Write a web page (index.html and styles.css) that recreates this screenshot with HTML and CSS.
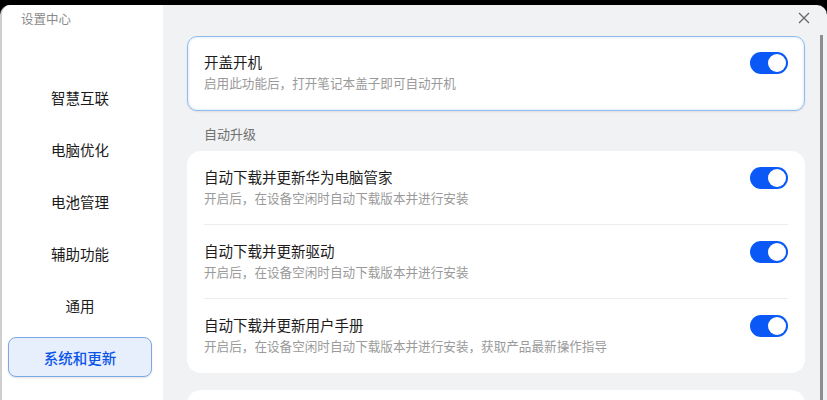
FILE: index.html
```html
<!DOCTYPE html>
<html lang="zh-CN">
<head>
<meta charset="utf-8">
<link rel="stylesheet" href="styles.css">
</head>
<body>
<div class="window">
  <aside class="sidebar">
    <div class="app-title">设置中心</div>
    <nav class="nav">
      <div class="nav-item">智慧互联</div>
      <div class="nav-item">电脑优化</div>
      <div class="nav-item">电池管理</div>
      <div class="nav-item">辅助功能</div>
      <div class="nav-item">通用</div>
      <div class="nav-item active">系统和更新</div>
    </nav>
  </aside>
  <main class="main">
    <div class="topbar">
      <svg class="close" width="12" height="12" viewBox="0 0 12 12"><path d="M1 1 L11 11 M11 1 L1 11" stroke="#666" stroke-width="1.3" fill="none"/></svg>
    </div>
    <div class="content">
      <div class="card focused">
        <div class="row">
          <div class="texts">
            <div class="title">开盖开机</div>
            <div class="sub">启用此功能后，打开笔记本盖子即可自动开机</div>
          </div>
          <div class="toggle"><span class="knob"></span></div>
        </div>
      </div>
      <div class="section-label">自动升级</div>
      <div class="card">
        <div class="row">
          <div class="texts">
            <div class="title">自动下载并更新华为电脑管家</div>
            <div class="sub">开启后，在设备空闲时自动下载版本并进行安装</div>
          </div>
          <div class="toggle"><span class="knob"></span></div>
        </div>
        <div class="row">
          <div class="texts">
            <div class="title">自动下载并更新驱动</div>
            <div class="sub">开启后，在设备空闲时自动下载版本并进行安装</div>
          </div>
          <div class="toggle"><span class="knob"></span></div>
        </div>
        <div class="row">
          <div class="texts">
            <div class="title">自动下载并更新用户手册</div>
            <div class="sub">开启后，在设备空闲时自动下载版本并进行安装，获取产品最新操作指导</div>
          </div>
          <div class="toggle"><span class="knob"></span></div>
        </div>
      </div>
      <div class="card next"></div>
    </div>
    <div class="scrollbar"></div>
  </main>
</div>
</body>
</html>
```
FILE: styles.css
```css
* { box-sizing: border-box; }
html, body { margin: 0; padding: 0; }
body {
  background: #000;
  width: 827px;
  height: 400px;
  overflow: hidden;
  font-family: "Noto Sans CJK SC", "Noto Sans", sans-serif;
  padding-top: 5px;
}
.window {
  display: flex;
  height: 395px;
  border-radius: 10px 10px 0 0;
  overflow: hidden;
  background: #f1f2f4;
  border-left: 2px solid #cfcfcf;
}
.sidebar {
  width: 161px;
  flex: none;
  background: #fff;
  display: flex;
  flex-direction: column;
}
.app-title {
  font-size: 12.5px;
  color: #8a8a8a;
  padding: 5px 0 0 19px;
  line-height: 18px;
  flex: none;
}
.nav {
  margin-top: 49px;
  display: flex;
  flex-direction: column;
  gap: 12px;
  padding: 0 11px 0 6px;
  flex: none;
}
.nav-item {
  height: 40px;
  flex: none;
  display: flex;
  align-items: center;
  justify-content: center;
  font-size: 14.5px;
  color: #1a1a1a;
  border: 1.5px solid transparent;
  border-radius: 8px;
}
.nav-item.active {
  background: #e7effd;
  border-color: #7da8e6;
  color: #0a55e8;
  font-weight: 500;
  box-shadow: 0 1px 2px rgba(0,0,0,0.12);
}
.main {
  flex: 1;
  position: relative;
  display: flex;
  flex-direction: column;
}
.topbar {
  height: 31px;
  flex: none;
  display: flex;
  justify-content: flex-end;
  align-items: flex-start;
  padding: 7px 17px 0 0;
}
.content {
  flex: none;
  padding: 0 22px 0 24px;
  display: flex;
  flex-direction: column;
}
.card {
  flex: none;
  background: #fff;
  border-radius: 14px;
  padding: 0 17px;
}
.card.focused {
  border: 1.5px solid #91bbee;
  border-radius: 10px;
  padding: 0 16px;
  box-shadow: inset 0 0 3px rgba(120,170,230,0.35), 0 1px 2px rgba(0,0,0,0.08);
}
.card.focused .row { height: 73px; padding-top: 15px; }
.row {
  height: 74px;
  display: flex;
  align-items: flex-start;
  justify-content: space-between;
  padding-top: 16px;
  border-bottom: 1px solid #ececec;
}
.row:last-child { border-bottom: none; }
.title {
  font-size: 14.5px;
  line-height: 20px;
  color: #1c1c1c;
}
.sub {
  font-size: 12.6px;
  line-height: 18px;
  color: #9a9a9a;
  margin-top: 2px;
}
.toggle {
  width: 38px;
  height: 22px;
  border-radius: 11px;
  background: #0a59f7;
  position: relative;
}
.knob {
  position: absolute;
  right: 2px;
  top: 2px;
  width: 18px;
  height: 18px;
  border-radius: 50%;
  background: #fff;
}
.section-label {
  flex: none;
  font-size: 13px;
  color: #707070;
  line-height: 18px;
  padding: 14px 0 8px 17px;
}
.card.next {
  margin-top: 17px;
  height: 40px;
}
.scrollbar {
  position: absolute;
  right: 4px;
  top: 30px;
  bottom: 0;
  width: 3px;
  background: #8e8e8e;
}
```
